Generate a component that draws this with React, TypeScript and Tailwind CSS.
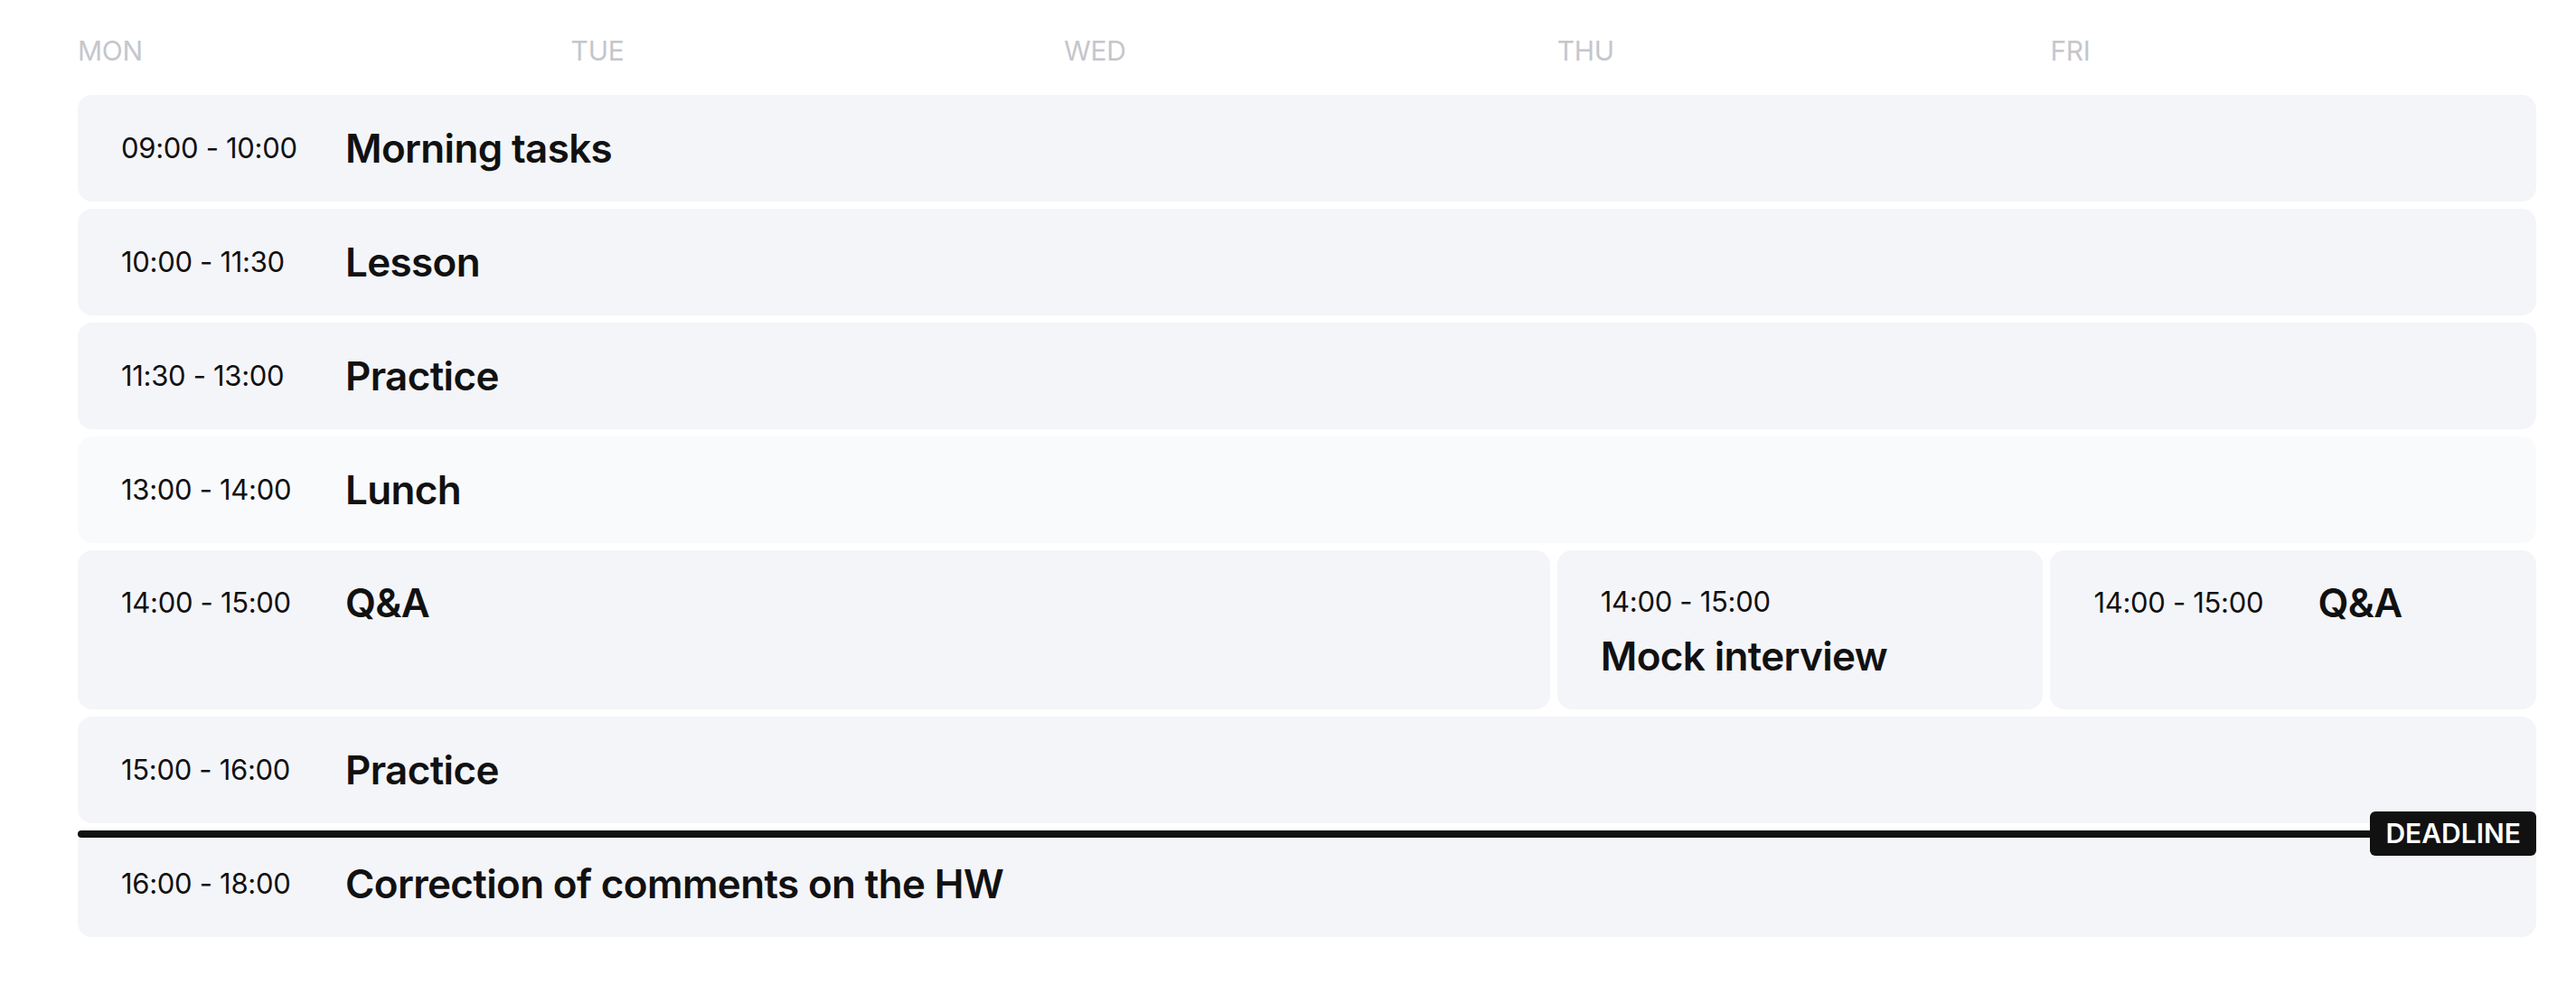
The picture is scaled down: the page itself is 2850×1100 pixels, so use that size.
import React from "react";

const days = ["MON", "TUE", "WED", "THU", "FRI"];

type Slot = {
	time: string;
	title: string;
	light?: boolean;
};

const before: Slot[] = [
	{ time: "09:00 - 10:00", title: "Morning tasks" },
	{ time: "10:00 - 11:30", title: "Lesson" },
	{ time: "11:30 - 13:00", title: "Practice" },
	{ time: "13:00 - 14:00", title: "Lunch", light: true },
];

function Row({ time, title, light }: Slot) {
	return (
		<div
			className={`col-span-5 flex items-center h-[118px] px-[48px] rounded-2xl ${
				light ? "bg-[#f9fafc]" : "bg-[#f4f5f9]"
			}`}
		>
			<span className="w-[248px] shrink-0 text-[31px] leading-[40px] tracking-[-0.01em]">{time}</span>
			<span className="text-[44px] leading-[52px] font-semibold tracking-[-0.015em]">{title}</span>
		</div>
	);
}

function App() {
	return (
		<div className="min-h-screen bg-white pl-[86px] pr-[44px] pt-[38px] text-[#111] font-['Inter',sans-serif]">
			<div className="grid grid-cols-5 gap-x-2 mb-[31px]">
				{days.map((d) => (
					<span key={d} className="text-[30px] leading-[36px] tracking-[-0.01em] text-[#c5c6cc]">
						{d}
					</span>
				))}
			</div>

			<div className="grid grid-cols-5 gap-2">
				{before.map((s) => (
					<Row key={s.time} {...s} />
				))}

				<div className="col-span-3 h-[176px] px-[48px] rounded-2xl bg-[#f4f5f9]">
					<div className="flex items-center h-[116px]">
						<span className="w-[248px] shrink-0 text-[31px] leading-[40px] tracking-[-0.01em]">14:00 - 15:00</span>
						<span className="text-[44px] leading-[52px] font-semibold tracking-[-0.015em]">Q&amp;A</span>
					</div>
				</div>
				<div className="h-[176px] px-[48px] pt-[37px] rounded-2xl bg-[#f4f5f9]">
					<div className="text-[31px] leading-[40px] tracking-[-0.01em]">14:00 - 15:00</div>
					<div className="mt-[14px] text-[44px] leading-[52px] font-semibold tracking-[-0.015em]">Mock interview</div>
				</div>
				<div className="h-[176px] px-[48px] rounded-2xl bg-[#f4f5f9]">
					<div className="flex items-center h-[116px]">
						<span className="w-[248px] shrink-0 text-[31px] leading-[40px] tracking-[-0.01em]">14:00 - 15:00</span>
						<span className="text-[44px] leading-[52px] font-semibold tracking-[-0.015em]">Q&amp;A</span>
					</div>
				</div>

				<Row time="15:00 - 16:00" title="Practice" />

				<div className="relative col-span-5">
					<Row time="16:00 - 18:00" title="Correction of comments on the HW" />
					<div className="absolute left-0 right-0 top-0 h-2 rounded-l-full bg-[#111]" />
					<div className="absolute right-0 top-[-21px] h-[49px] px-[17px] flex items-center rounded-md bg-[#111] text-white text-[30px] font-semibold">
						DEADLINE
					</div>
				</div>
			</div>
		</div>
	);
}

export default App;
